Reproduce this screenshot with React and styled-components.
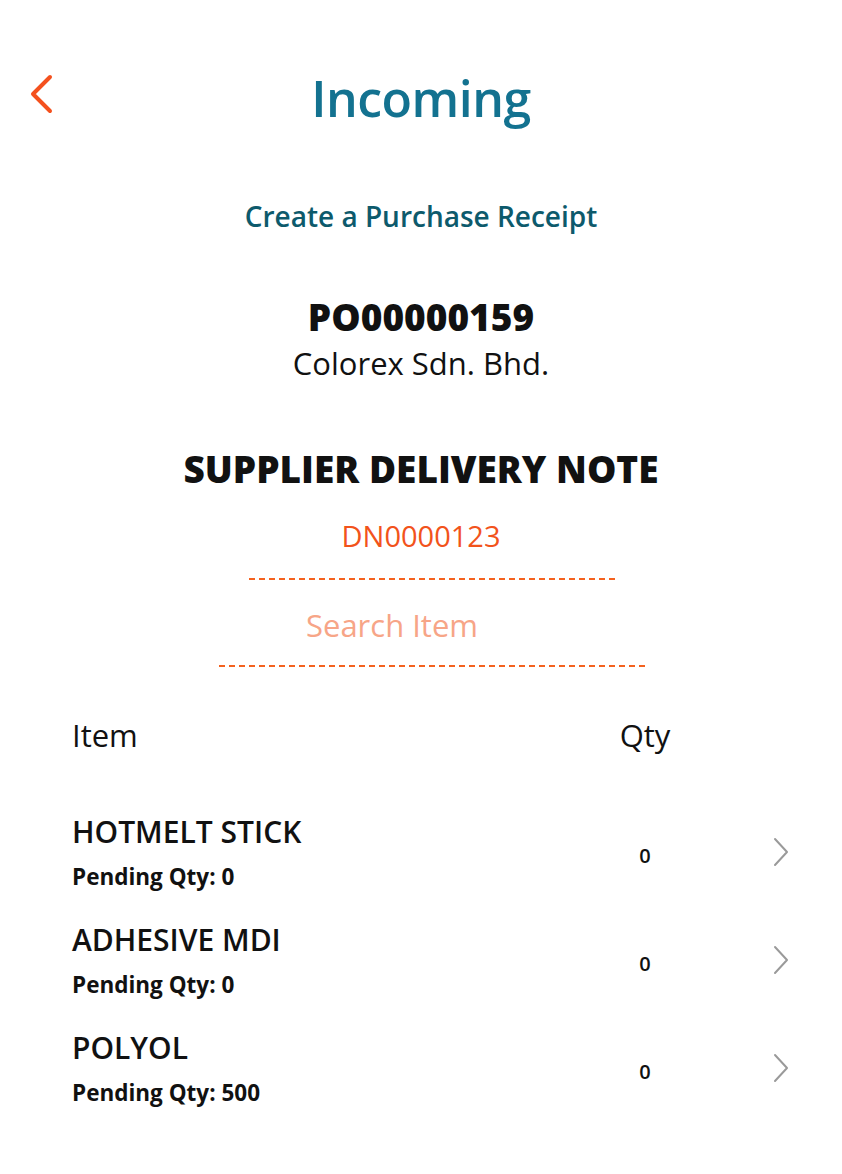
import React from "react";
import styled, { createGlobalStyle } from "styled-components";

const Global = createGlobalStyle`
  html, body { margin: 0; padding: 0; background: #fff; }
  body { font-family: "Open Sans", "Noto Sans", sans-serif; color: #111; }
`;

const Page = styled.div`
  width: 842px;
  min-height: 1174px;
  display: flex;
  flex-direction: column;
  align-items: center;
  box-sizing: border-box;
  padding-top: 66px;
`;

const Header = styled.header`
  width: 100%;
  height: 64px;
  display: grid;
  grid-template-columns: 1fr auto 1fr;
  align-items: center;
  padding: 0 29px;
  box-sizing: border-box;
`;

const BackButton = styled.button`
  justify-self: start;
  background: none;
  border: 0;
  padding: 0;
  width: 26px;
  height: 40px;
  display: flex;
  align-items: center;
  cursor: pointer;
  margin-top: -8px;
`;

const Title = styled.h1`
  margin: 0;
  font-size: 50px;
  font-weight: 600;
  color: #137290;
  letter-spacing: -0.5px;
  line-height: 64px;
`;

const Subtitle = styled.h2`
  margin: 68px 0 0;
  font-size: 28px;
  font-weight: 600;
  color: #0d5a6c;
  line-height: 36px;
`;

const PoNumber = styled.div`
  margin-top: 61px;
  font-size: 37px;
  font-weight: 800;
  line-height: 44px;
`;

const Supplier = styled.div`
  margin-top: 4px;
  font-size: 31px;
  font-weight: 500;
  line-height: 40px;
`;

const SectionTitle = styled.div`
  margin-top: 64px;
  font-size: 37px;
  font-weight: 800;
  line-height: 44px;
`;

const DeliveryNote = styled.div`
  margin-top: 27px;
  font-size: 29px;
  font-weight: 500;
  color: #f2531b;
  line-height: 36px;
`;

const Dashed = styled.div`
  width: ${(p) => p.$w}px;
  height: 2px;
  margin-top: ${(p) => p.$mt}px;
  margin-left: ${(p) => p.$shift || 0}px;
  background-image: repeating-linear-gradient(
    to right,
    #f4621f 0 6px,
    transparent 6px 10px
  );
`;

const SearchField = styled.input`
  margin-top: 25px;
  margin-left: -58px;
  width: 400px;
  border: 0;
  outline: none;
  background: transparent;
  font-family: inherit;
  font-size: 31px;
  font-weight: 500;
  text-align: center;
  color: #f7a587;
  line-height: 40px;
  height: 40px;
  padding: 0;
  &::placeholder { color: #f7a587; opacity: 1; }
`;

const Table = styled.div`
  width: 100%;
  box-sizing: border-box;
  padding: 0 37px 0 72px;
  margin-top: 48px;
  display: flex;
  flex-direction: column;
`;

const Row = styled.div`
  display: grid;
  grid-template-columns: 1fr 100px 110px;
  align-items: center;
  margin-top: ${(p) => p.$mt || 0}px;
`;

const HeadCell = styled.div`
  font-size: 31px;
  font-weight: 500;
  line-height: 40px;
  text-align: ${(p) => (p.$center ? "center" : "left")};
`;

const ItemInfo = styled.div`
  display: flex;
  flex-direction: column;
`;

const ItemName = styled.div`
  font-size: 30px;
  font-weight: 600;
  line-height: 40px;
`;

const Pending = styled.div`
  margin-top: 10px;
  font-size: 22.5px;
  font-weight: 700;
  line-height: 30px;
`;

const QtyValue = styled.div`
  text-align: center;
  font-size: 20px;
  font-weight: 600;
  margin-top: 6px;
`;

const Chevron = styled.div`
  display: flex;
  padding-left: 78px;
`;

const items = [
  { name: "HOTMELT STICK", pending: 0, qty: 0 },
  { name: "ADHESIVE MDI", pending: 0, qty: 0 },
  { name: "POLYOL", pending: 500, qty: 0 },
];

export default function App() {
  return (
    <>
      <Global />
      <Page>
        <Header>
          <BackButton aria-label="Back">
            <svg width="24" height="40" viewBox="0 0 24 40">
              <path d="M21 3 L4 20 L21 37" fill="none" stroke="#f4511e" strokeWidth="4" strokeLinecap="round" strokeLinejoin="round" />
            </svg>
          </BackButton>
          <Title>Incoming</Title>
          <div />
        </Header>
        <Subtitle>Create a Purchase Receipt</Subtitle>
        <PoNumber>PO00000159</PoNumber>
        <Supplier>Colorex Sdn. Bhd.</Supplier>
        <SectionTitle>SUPPLIER DELIVERY NOTE</SectionTitle>
        <DeliveryNote>DN0000123</DeliveryNote>
        <Dashed $w={366} $mt={24} $shift={22} />
        <SearchField placeholder="Search Item" />
        <Dashed $w={426} $mt={20} $shift={22} />
        <Table>
          <Row>
            <HeadCell>Item</HeadCell>
            <HeadCell $center>Qty</HeadCell>
            <div />
          </Row>
          {items.map((it, i) => (
            <Row key={it.name} $mt={i === 0 ? 57 : 28}>
              <ItemInfo>
                <ItemName>{it.name}</ItemName>
                <Pending>Pending Qty: {it.pending}</Pending>
              </ItemInfo>
              <QtyValue>{it.qty}</QtyValue>
              <Chevron>
                <svg width="16" height="30" viewBox="0 0 16 30">
                  <path d="M2 2 L14 15 L2 28" fill="none" stroke="#9a9a9a" strokeWidth="2" strokeLinecap="round" strokeLinejoin="round" />
                </svg>
              </Chevron>
            </Row>
          ))}
        </Table>
      </Page>
    </>
  );
}
